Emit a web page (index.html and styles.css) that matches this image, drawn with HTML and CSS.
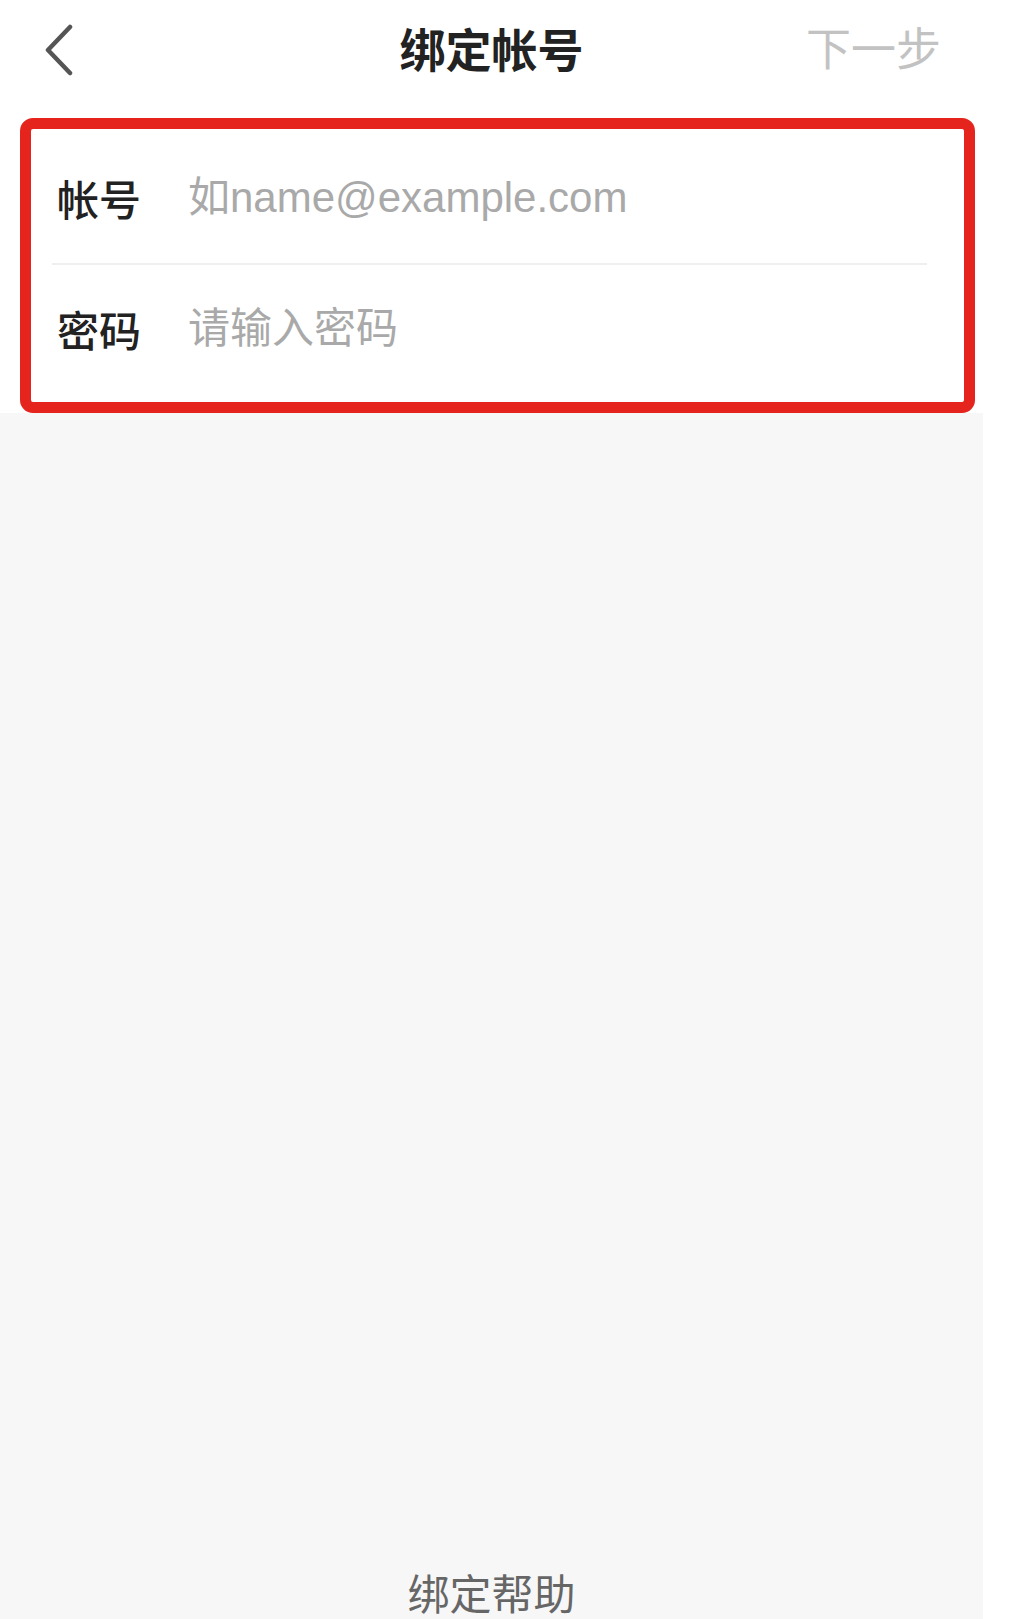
FILE: index.html
```html
<!DOCTYPE html>
<html lang="zh-CN">
<head>
<meta charset="utf-8">
<title>绑定帐号</title>
<link rel="stylesheet" href="styles.css">
</head>
<body>
<div class="page">
  <div class="screen">
    <header class="topbar">
      <div class="topbar-left">
        <svg class="back-icon" viewBox="0 0 30 52" width="30" height="52" aria-hidden="true">
          <polyline points="26,3 4,26 26,49" fill="none" stroke="#555" stroke-width="4.5" stroke-linecap="round" stroke-linejoin="round"/>
        </svg>
      </div>
      <h1 class="topbar-title">绑定帐号</h1>
      <div class="topbar-right">
        <span class="next-btn">下一步</span>
      </div>
    </header>

    <section class="form-section">
      <div class="card">
        <div class="row row-first">
          <span class="row-label">帐号</span>
          <input class="row-input" type="text" placeholder="如name@example.com">
        </div>
        <div class="divider"></div>
        <div class="row row-second">
          <span class="row-label">密码</span>
          <input class="row-input" type="password" placeholder="请输入密码">
        </div>
      </div>
    </section>

    <main class="content"></main>

    <footer class="help">
      <span class="help-link">绑定帮助</span>
    </footer>
  </div>
  <div class="side-strip"></div>
</div>
</body>
</html>
```

FILE: styles.css
```css
* {
  box-sizing: border-box;
}

html, body {
  margin: 0;
  padding: 0;
  background: #ffffff;
}

body {
  font-family: "Noto Sans CJK SC", "Noto Sans", sans-serif;
}

.page {
  display: flex;
  width: 1014px;
  min-height: 1619px;
}

.screen {
  width: 983px;
  min-height: 1619px;
  display: flex;
  flex-direction: column;
  background: #f7f7f7;
}

.side-strip {
  flex: 1;
  background: #ffffff;
}

/* Top bar */
.topbar {
  height: 104px;
  padding-bottom: 10px;
  display: grid;
  grid-template-columns: 1fr auto 1fr;
  align-items: center;
  background: #ffffff;
}

.topbar-left {
  padding-left: 44px;
  display: flex;
  align-items: center;
}

.back-icon {
  display: block;
  margin-top: 6px;
}

.topbar-title {
  margin: 0;
  font-size: 46px;
  font-weight: 700;
  line-height: 56px;
  color: #222222;
  letter-spacing: 0;
}

.topbar-right {
  display: flex;
  justify-content: flex-end;
  padding-right: 42px;
}

.next-btn {
  font-size: 45px;
  line-height: 56px;
  color: #c2c2c2;
}

/* Form */
.form-section {
  background: #ffffff;
  padding: 14px 8px 0 20px;
}

.card {
  border: 11px solid #e5241d;
  border-radius: 13px;
  background: #ffffff;
}

.row {
  display: flex;
  align-items: center;
  padding-left: 26px;
}

.row-first {
  height: 134px;
  padding-top: 4px;
}

.row-second {
  height: 137px;
  padding-bottom: 9px;
}

.row-label {
  width: 131px;
  flex: none;
  font-size: 42px;
  line-height: 50px;
  font-weight: 500;
  color: #222222;
}

.row-input {
  flex: 1;
  min-width: 0;
  border: none;
  outline: none;
  background: transparent;
  padding: 0;
  margin: 0;
  height: 56px;
  font-family: "Liberation Sans", "Noto Sans CJK SC", sans-serif;
  font-size: 42px;
  color: #333;
}

.row-input::placeholder {
  color: #a9a9a9;
  opacity: 1;
}

.row-second .row-input::placeholder {
  font-family: "Noto Sans CJK SC", sans-serif;
  font-size: 42px;
}

.divider {
  height: 2px;
  background: #efefef;
  margin: 0 37px 0 21px;
}

/* Body */
.content {
  flex: 1;
}

.help {
  display: flex;
  justify-content: center;
  padding-bottom: 2px;
}

.help-link {
  font-size: 42px;
  line-height: 50px;
  color: #666666;
}
```
